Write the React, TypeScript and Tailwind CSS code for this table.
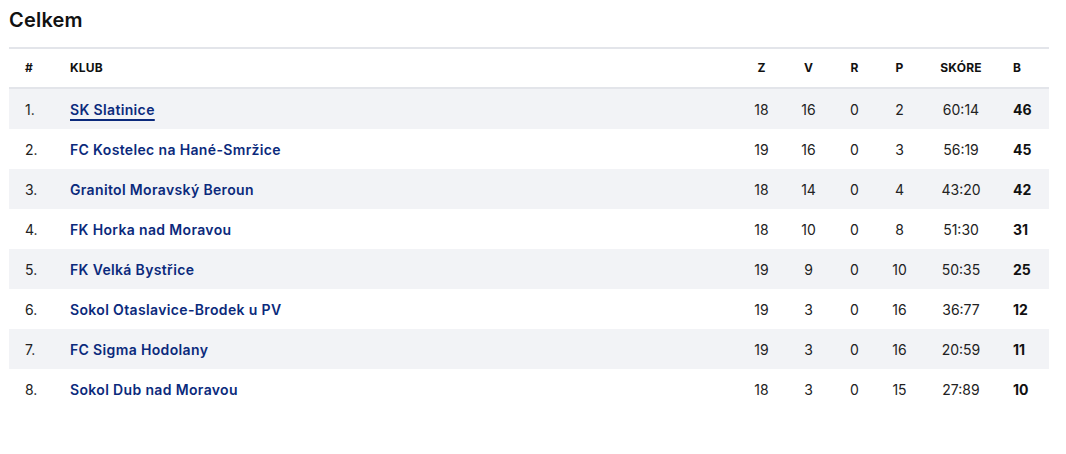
import React from "react";

const rows: [string, string, number, number, number, number, string, number][] = [
  ["1.", "SK Slatinice", 18, 16, 0, 2, "60:14", 46],
  ["2.", "FC Kostelec na Hané-Smržice", 19, 16, 0, 3, "56:19", 45],
  ["3.", "Granitol Moravský Beroun", 18, 14, 0, 4, "43:20", 42],
  ["4.", "FK Horka nad Moravou", 18, 10, 0, 8, "51:30", 31],
  ["5.", "FK Velká Bystřice", 19, 9, 0, 10, "50:35", 25],
  ["6.", "Sokol Otaslavice-Brodek u PV", 19, 3, 0, 16, "36:77", 12],
  ["7.", "FC Sigma Hodolany", 19, 3, 0, 16, "20:59", 11],
  ["8.", "Sokol Dub nad Moravou", 18, 3, 0, 15, "27:89", 10],
];

const grid = "grid grid-cols-[45px_1fr_47px_47px_45px_45px_78px_49px] items-center";

export default function App() {
  return (
    <div className="w-[1066px] h-[454px] bg-white font-['Inter',sans-serif] text-[#1a1a1a]">
      <div className="px-[9px] pt-[7px]">
        <h2 className="text-[20px] leading-[26px] font-semibold text-[#111] tracking-[0.2px]">Celkem</h2>
        <div className="mt-[14px] w-[1040px] border-t-2 border-[#e3e5ea]">
          <div className={`${grid} h-[40px] border-b-2 border-[#e3e5ea] text-[12px] font-bold text-[#111] tracking-[0.2px]`}>
            <div className="pl-4">#</div>
            <div className="pl-4">KLUB</div>
            <div className="text-center">Z</div>
            <div className="text-center">V</div>
            <div className="text-center">R</div>
            <div className="text-center">P</div>
            <div className="text-center">SKÓRE</div>
            <div className="pl-[13px]">B</div>
          </div>
          {rows.map((r, i) => (
            <div
              key={i}
              className={`${grid} h-[40px] text-[14px] ${i % 2 === 0 ? "bg-[#f2f3f6]" : "bg-white"}`}
            >
              <div className="pl-4 text-[#222]">{r[0]}</div>
              <div className="pl-4">
                <span
                  className={`font-semibold text-[#0b2a7c] tracking-[0.35px] ${i === 0 ? "underline decoration-2 underline-offset-[4px]" : ""}`}
                >
                  {r[1]}
                </span>
              </div>
              <div className="text-center text-[#222]">{r[2]}</div>
              <div className="text-center text-[#222]">{r[3]}</div>
              <div className="text-center text-[#222]">{r[4]}</div>
              <div className="text-center text-[#222]">{r[5]}</div>
              <div className="text-center text-[#222]">{r[6]}</div>
              <div className="pl-[13px] font-bold text-[#111]">{r[7]}</div>
            </div>
          ))}
        </div>
      </div>
    </div>
  );
}
